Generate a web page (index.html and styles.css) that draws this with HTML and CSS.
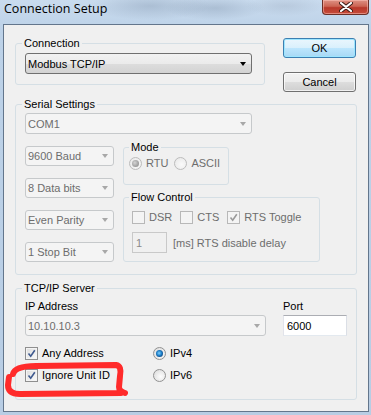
FILE: index.html
```html
<!DOCTYPE html>
<html lang="en">
<head>
  <meta charset="UTF-8">
  <title>Connection Setup</title>
  <link rel="stylesheet" href="styles.css">
</head>
<body>
  <div class="window">
    <div class="titlebar">
      <span class="title">Connection Setup</span>
      <span class="close">
        <svg width="14" height="10" viewBox="0 0 14 10"><path d="M2 1 L12 9 M12 1 L2 9" stroke="#3a1a14" stroke-width="4" stroke-linecap="round"/><path d="M2 1 L12 9 M12 1 L2 9" stroke="#fff" stroke-width="2.2" stroke-linecap="round"/></svg>
      </span>
    </div>

    <div class="client">
      <div class="top-row">
        <div class="group conn">
          <div class="group-title">Connection</div>
          <div class="combo combo-wide">
            <span>Modbus TCP/IP</span>
            <i class="arrow"></i>
          </div>
        </div>
        <div class="buttons">
          <button class="btn btn-default">OK</button>
          <button class="btn">Cancel</button>
        </div>
      </div>

      <div class="group serial">
        <div class="group-title">Serial Settings</div>
        <div class="combo combo-wide disabled"><span>COM1</span><i class="arrow"></i></div>
        <div class="serial-body">
          <div class="serial-left">
            <div class="combo combo-small disabled"><span>9600 Baud</span><i class="arrow"></i></div>
            <div class="combo combo-small disabled"><span>8 Data bits</span><i class="arrow"></i></div>
            <div class="combo combo-small disabled"><span>Even Parity</span><i class="arrow"></i></div>
            <div class="combo combo-small disabled"><span>1 Stop Bit</span><i class="arrow"></i></div>
          </div>
          <div class="serial-right">
            <div class="group mode">
              <div class="group-title">Mode</div>
              <div class="opt-row">
                <span class="opt dis"><i class="radio on"></i>RTU</span>
                <span class="opt dis"><i class="radio"></i>ASCII</span>
              </div>
            </div>
            <div class="group flow">
              <div class="group-title">Flow Control</div>
              <div class="opt-row">
                <span class="opt dis"><i class="chk"></i>DSR</span>
                <span class="opt dis"><i class="chk"></i>CTS</span>
                <span class="opt dis"><i class="chk on"><svg width="9" height="9" viewBox="0 0 9 9"><path d="M1.5 4.5 L3.7 7.2 L7.8 1.2" fill="none" stroke="#9a9a9a" stroke-width="1.6"/></svg></i>RTS Toggle</span>
              </div>
              <div class="delay-row">
                <span class="edit edit-delay disabled">1</span>
                <span class="dis-text">[ms] RTS disable delay</span>
              </div>
            </div>
          </div>
        </div>
      </div>

      <div class="group tcp">
        <div class="group-title">TCP/IP Server</div>
        <div class="tcp-grid">
          <span class="field-label">IP Address</span>
          <span class="field-label">Port</span>
          <div class="combo combo-ip disabled"><span>10.10.10.3</span><i class="arrow"></i></div>
          <span class="edit edit-port">6000</span>
        </div>
        <div class="tcp-options">
          <span class="opt"><i class="chk on"><svg width="9" height="9" viewBox="0 0 9 9"><path d="M1.5 4.5 L3.7 7.2 L7.8 1.2" fill="none" stroke="#3f5a8f" stroke-width="1.6"/></svg></i>Any Address</span>
          <span class="opt"><i class="radio on blue"></i>IPv4</span>
          <span class="opt"><i class="chk on"><svg width="9" height="9" viewBox="0 0 9 9"><path d="M1.5 4.5 L3.7 7.2 L7.8 1.2" fill="none" stroke="#3f5a8f" stroke-width="1.6"/></svg></i>Ignore Unit ID</span>
          <span class="opt"><i class="radio"></i>IPv6</span>
        </div>
      </div>
    </div>

    <!-- marker drawn over the screenshot -->
    <svg class="marker" width="371" height="415" viewBox="0 0 371 415">
      <path d="M13 374 Q15 366 36 366 L116 365 Q122 366 120 376 L119 387 Q119 391 125 393 M121 393 L20 394 Q8 394 8 385 L9 377"
            fill="none" stroke="#ff2b2b" stroke-width="6" stroke-linecap="round" stroke-linejoin="round"/>
    </svg>
  </div>
</body>
</html>
```

FILE: styles.css
```css
body {
  margin: 0;
  font-family: "Liberation Sans", Arial, sans-serif;
  font-size: 11px;
  color: #000;
}

.window {
  position: relative;
  width: 371px;
  height: 415px;
  box-sizing: border-box;
  padding: 0 2px 3px 3px;
  display: flex;
  flex-direction: column;
  overflow: hidden;
  background:
    radial-gradient(ellipse 60px 14px at 150px 6px, rgba(120,140,165,0.35), transparent),
    radial-gradient(ellipse 50px 12px at 215px 8px, rgba(110,130,155,0.3), transparent),
    radial-gradient(ellipse 40px 10px at 285px 6px, rgba(150,165,185,0.3), transparent),
    linear-gradient(#c9dbee, #bdd2e8 30px, #b8cde4);
}

.titlebar {
  height: 24px;
  flex: none;
  display: flex;
  align-items: flex-start;
}

.title {
  font-family: "Open Sans", "Noto Sans", sans-serif;
  font-size: 12.5px;
  margin: 0 0 0 1px;
  line-height: 17px;
  color: #000;
}

.close {
  margin-left: auto;
  width: 47px;
  height: 15px;
  box-sizing: border-box;
  border: 1px solid #6b2f27;
  border-top: none;
  border-radius: 0 0 4px 4px;
  background: linear-gradient(#dd9184, #cc6453 45%, #b8382a 55%, #c64c3b);
  box-shadow: inset 0 0 0 1px rgba(255,200,190,0.5);
  display: flex;
  align-items: center;
  justify-content: center;
}

.client {
  flex: 1;
  border: 1px solid #63768c;
  background: #f0f0f0;
  padding: 13px 0 0 11px;
}

.top-row {
  display: flex;
  align-items: flex-start;
}

/* group boxes */
.group {
  box-sizing: border-box;
  border: 1px solid #d5dfe5;
  border-radius: 3px;
}

.group-title {
  width: fit-content;
  margin: -7px 0 0 6px;
  padding: 0 2px;
  line-height: 13px;
  background: #f0f0f0;
}

.conn {
  width: 250px;
  margin-top: 5px;
  padding: 0 12px 10px 0;
}

.conn .combo {
  margin: 3px 0 0 9px;
}

.buttons {
  margin-left: 18px;
  display: flex;
  flex-direction: column;
  gap: 14px;
}

.btn {
  width: 73px;
  height: 20px;
  padding: 0;
  font-family: inherit;
  font-size: 11px;
  color: #000;
  border: 1px solid #707070;
  border-radius: 3px;
  background: linear-gradient(#f2f2f2, #ebebeb 50%, #dddddd 50%, #cfcfcf);
  box-shadow: inset 0 0 0 1px rgba(255,255,255,0.7);
}

.btn-default {
  border-color: #3c7fb1;
  background: linear-gradient(#eaf6fd, #d9f0fc 50%, #bee6fd 50%, #a7d9f5);
  box-shadow: inset 0 0 0 1px #9de6ff;
}

/* combo boxes */
.combo {
  box-sizing: border-box;
  height: 21px;
  display: flex;
  align-items: center;
  border: 1px solid #707070;
  border-radius: 3px;
  background: linear-gradient(#f2f2f2, #ebebeb 50%, #dddddd 50%, #d3d3d3);
  padding-left: 2px;
}

.combo span {
  flex: 1;
}

.combo .arrow {
  width: 17px;
  display: flex;
  justify-content: center;
}

.combo .arrow::before {
  content: "";
  border-left: 3.5px solid transparent;
  border-right: 3.5px solid transparent;
  border-top: 4px solid #000;
}

.combo.disabled {
  border-color: #c6c9cb;
  background: #f4f4f4;
  color: #6d6d6d;
}

.combo.disabled .arrow::before {
  border-top-color: #a8a8a8;
}

.combo-wide {
  width: 227px;
}

.combo-small {
  width: 89px;
  height: 20px;
}

.combo-ip {
  width: 241px;
  background: linear-gradient(90deg, #ebebeb 0, #ebebeb 221px, #f4f4f4 221px);
}

/* serial settings */
.serial {
  width: 342px;
  margin-top: 12px;
  padding: 0 0 12px 9px;
}

.serial .group-title {
  margin-left: -3px;
}

.serial > .combo {
  margin-top: 2px;
}

.serial-body {
  display: flex;
  margin-top: 7px;
}

.serial-left {
  padding-top: 5px;
  display: flex;
  flex-direction: column;
  gap: 12px;
}

.serial-right {
  margin-left: 9px;
  display: flex;
  flex-direction: column;
}

.mode {
  width: 106px;
  margin-top: 6px;
  padding: 0 0 14px 5px;
}

.mode .group-title {
  margin-left: 0;
}

.mode .opt-row {
  margin-top: 3px;
  gap: 6px;
}

.flow {
  width: 197px;
  margin-top: 12px;
  padding: 0 0 8px 8px;
}

.flow .group-title {
  margin-left: -3px;
}

.flow .opt-row {
  margin-top: 7px;
  gap: 8px;
}

.opt-row {
  display: flex;
  height: 13px;
}

.opt {
  display: flex;
  align-items: center;
  gap: 4px;
  line-height: 13px;
}

.opt.dis,
.dis-text {
  color: #6d6d6d;
}

.delay-row {
  display: flex;
  align-items: center;
  gap: 6px;
  margin-top: 8px;
}

/* edit boxes */
.edit {
  box-sizing: border-box;
  height: 21px;
  display: flex;
  align-items: center;
  padding-left: 3px;
  border: 1px solid #abadb3;
  border-color: #abadb3 #dbdfe6 #e3e9ef #e2e3ea;
  background: #fff;
}

.edit.disabled {
  border-color: #c9c9c9;
  background: #f0f0f0;
  color: #8a8a8a;
}

.edit-delay {
  width: 35px;
}

.edit-port {
  width: 64px;
}

/* check boxes and radio buttons */
.chk {
  box-sizing: border-box;
  width: 13px;
  height: 13px;
  border: 1px solid #8f8f8f;
  background: linear-gradient(135deg, #dcdcdc, #fbfbfb);
  box-shadow: inset 0 0 0 1px #f4f4f4;
  display: flex;
  align-items: center;
  justify-content: center;
}

.opt.dis .chk {
  border-color: #b8b8b8;
  background: #f4f4f4;
}

.radio {
  box-sizing: border-box;
  width: 13px;
  height: 13px;
  border-radius: 50%;
  border: 1px solid #929292;
  background: radial-gradient(circle at 60% 60%, #fdfdfd, #d8d8d8);
  display: flex;
  align-items: center;
  justify-content: center;
}

.opt.dis .radio {
  border-color: #bcbcbc;
  background: radial-gradient(circle at 60% 60%, #fafafa, #e6e6e6);
}

.radio.on::before {
  content: "";
  width: 7px;
  height: 7px;
  border-radius: 50%;
  background: radial-gradient(circle at 40% 40%, #d4d4d4, #9a9a9a 70%, #7f7f7f);
}

.radio.blue::before {
  background: radial-gradient(circle at 45% 45%, #7fd1ff 0, #1d7fc8 45%, #0b3f78 80%);
}

/* tcp/ip server */
.tcp {
  width: 342px;
  margin-top: 13px;
  padding: 0 0 17px 9px;
}

.tcp .group-title {
  margin-left: -3px;
}

.tcp-grid {
  display: grid;
  grid-template-columns: 241px 64px;
  column-gap: 17px;
  row-gap: 2px;
  margin-top: 5px;
}

.field-label {
  line-height: 13px;
}

.tcp-options {
  display: grid;
  grid-template-columns: 128px auto;
  row-gap: 9px;
  margin-top: 11px;
}

.marker {
  position: absolute;
  left: 0;
  top: 0;
  pointer-events: none;
}
```
